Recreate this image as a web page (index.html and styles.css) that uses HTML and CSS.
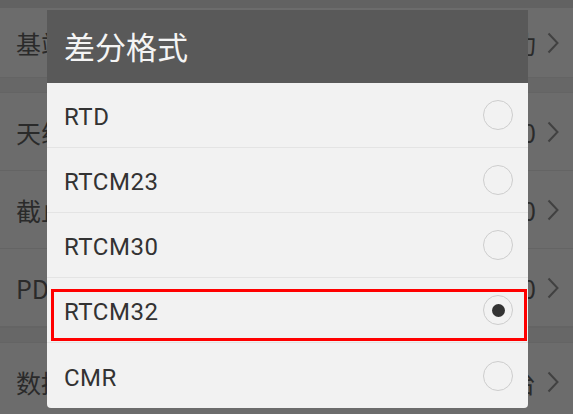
FILE: index.html
```html
<!DOCTYPE html>
<html lang="zh">
<head>
<meta charset="utf-8">
<title>差分格式</title>
<link rel="stylesheet" href="styles.css">
</head>
<body>
<div class="page">
  <div class="topbar"></div>
  <div class="row first">
    <span class="label">基站设置</span>
    <span class="value">成功</span>
    <svg class="chev" viewBox="0 0 12 22"><polyline points="1.5,1.5 10.5,11 1.5,20.5"/></svg>
  </div>
  <div class="gap"></div>
  <div class="row">
    <span class="label">天线高度</span>
    <span class="value">0</span>
    <svg class="chev" viewBox="0 0 12 22"><polyline points="1.5,1.5 10.5,11 1.5,20.5"/></svg>
  </div>
  <div class="row">
    <span class="label">截止角度</span>
    <span class="value">10</span>
    <svg class="chev" viewBox="0 0 12 22"><polyline points="1.5,1.5 10.5,11 1.5,20.5"/></svg>
  </div>
  <div class="row">
    <span class="label">PDOP限制</span>
    <span class="value">3.0</span>
    <svg class="chev" viewBox="0 0 12 22"><polyline points="1.5,1.5 10.5,11 1.5,20.5"/></svg>
  </div>
  <div class="gap"></div>
  <div class="row">
    <span class="label">数据链</span>
    <span class="value">内置电台</span>
    <svg class="chev" viewBox="0 0 12 22"><polyline points="1.5,1.5 10.5,11 1.5,20.5"/></svg>
  </div>
</div>

<div class="dialog">
  <div class="dialog-title">差分格式</div>
  <div class="options">
    <div class="option"><span class="opt-label">RTD</span><span class="radio"></span></div>
    <div class="option"><span class="opt-label">RTCM23</span><span class="radio"></span></div>
    <div class="option"><span class="opt-label">RTCM30</span><span class="radio"></span></div>
    <div class="option"><span class="opt-label">RTCM32</span><span class="radio checked"></span></div>
    <div class="option"><span class="opt-label">CMR</span><span class="radio"></span></div>
  </div>
  <div class="highlight"></div>
</div>
</body>
</html>
```

FILE: styles.css
```css
* { box-sizing: border-box; }

html, body {
  margin: 0;
  padding: 0;
  width: 573px;
  height: 414px;
  overflow: hidden;
}

body {
  background: #6b6b6b;
  font-family: Roboto, "Noto Sans CJK SC", sans-serif;
  position: relative;
}

.page {
  display: flex;
  flex-direction: column;
}

.topbar {
  height: 8px;
  background: #626262;
}

.row {
  height: 78px;
  display: flex;
  align-items: center;
  padding: 0 14px 0 16px;
  border-bottom: 1px solid #646464;
  background: #6c6c6c;
}

.row.first {
  height: 69px;
  border-bottom: none;
}

.gap {
  height: 16px;
  background: #676767;
  border-top: 1px solid #646464;
  border-bottom: 1px solid #646464;
}

.label {
  flex: 1;
  font-family: "Noto Sans CJK SC", Roboto, sans-serif;
  font-size: 25px;
  color: #2a2a2a;
}

.value {
  font-family: "Noto Sans CJK SC", Roboto, sans-serif;
  font-size: 25px;
  color: #2a2a2a;
  margin-right: 11px;
}

.chev {
  width: 12px;
  height: 22px;
  fill: none;
  stroke: #414141;
  stroke-width: 2;
}

.dialog {
  position: absolute;
  left: 47px;
  top: 10px;
  width: 481px;
  border-radius: 0 0 4px 4px;
  overflow: hidden;
  background: #f2f2f2;
}

.dialog-title {
  height: 73px;
  background: #595959;
  color: #f4f4f4;
  font-family: "Noto Sans CJK SC", sans-serif;
  font-size: 31px;
  display: flex;
  align-items: center;
  padding-left: 17px;
  padding-bottom: 3px;
}

.options {
  display: flex;
  flex-direction: column;
}

.option {
  height: 65px;
  display: flex;
  align-items: center;
  padding: 0 15px 0 17px;
  border-bottom: 1px solid #e4e4e4;
}

.option:last-child {
  border-bottom: none;
}

.opt-label {
  flex: 1;
  font-size: 24px;
  color: #333333;
  letter-spacing: 0.5px;
  padding-top: 4px;
}

.radio {
  width: 30px;
  height: 30px;
  border-radius: 50%;
  border: 1.5px solid #cdcdcd;
  display: flex;
  align-items: center;
  justify-content: center;
}

.radio.checked::after {
  content: "";
  width: 13px;
  height: 13px;
  border-radius: 50%;
  background: #333333;
}

.highlight {
  position: absolute;
  left: 4px;
  top: 279px;
  width: 476px;
  height: 52px;
  border: 3px solid #ff0000;
}
```
